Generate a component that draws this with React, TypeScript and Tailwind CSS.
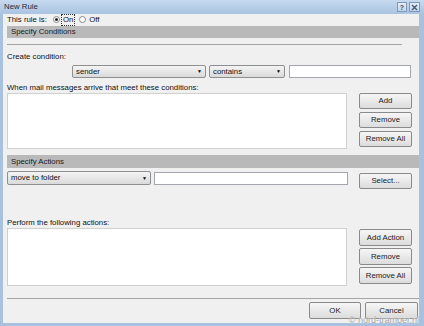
import React from 'react';

function Btn({ label, w = 'w-[53px]', h = 'h-[16px]' }: { label: string; w?: string; h?: string }) {
  return (
    <div
      className={`${w} ${h} flex items-center justify-center rounded-[2px] border border-[#8a8a8a] bg-gradient-to-b from-[#f6f6f6] to-[#dcdcdc] text-[#222]`}
    >
      {label}
    </div>
  );
}

function Select({ label, className }: { label: string; className: string }) {
  return (
    <div
      className={`${className} flex items-center rounded-[2px] border border-[#8e8f8f] bg-gradient-to-b from-[#f4f4f4] to-[#dadada] pl-[3px] pr-[3px]`}
    >
      <span>{label}</span>
      <span className="ml-auto text-[5px] leading-none text-black">▼</span>
    </div>
  );
}

function TextBox({ className }: { className: string }) {
  return <div className={`${className} border border-[#a3a6ad] bg-white`} />;
}

function Header({ label, h }: { label: string; h: string }) {
  return (
    <div className={`${h} flex items-center bg-[#b9b9b9] pl-[4px] text-[#1a1a1a]`}>
      {label}
    </div>
  );
}

function Radio({ checked }: { checked?: boolean }) {
  return (
    <div className="flex h-[7px] w-[7px] items-center justify-center rounded-full border border-[#8a8a8a] bg-white">
      {checked && <div className="h-[3px] w-[3px] rounded-full bg-[#222]" />}
    </div>
  );
}

export default function App() {
  return (
    <div className="relative flex h-[326px] w-[424px] flex-col overflow-hidden bg-[#a7c1df] font-['Liberation_Sans',Arial,sans-serif] text-[7.8px] leading-none text-[#111]">
      {/* title bar */}
      <div className="flex h-[14px] items-center bg-gradient-to-b from-[#c6daef] to-[#a9c3e1] pl-[4px] pr-[4px]">
        <span className="text-[7.8px] text-[#1b2a3c]">New Rule</span>
        <div className="ml-auto flex gap-[2px]">
          <div className="flex h-[10px] w-[10px] items-center justify-center border border-[#7f98b8] bg-gradient-to-b from-[#e4eef9] to-[#c2d5ec] text-[7px] font-bold text-[#3a4a5e]">
            ?
          </div>
          <div className="flex h-[10px] w-[11px] items-center justify-center border border-[#7f98b8] bg-gradient-to-b from-[#e4eef9] to-[#c2d5ec]">
            <svg width="7" height="7" viewBox="0 0 7 7">
              <path d="M1 1 L6 6 M6 1 L1 6" stroke="#4a5a6e" strokeWidth="1.4" />
            </svg>
          </div>
        </div>
      </div>

      {/* client area */}
      <div className="mb-[3px] ml-[3px] mr-[5px] flex flex-1 flex-col bg-[#f0f0f0] pl-[4px]">
        <div className="flex h-[12px] items-center">
          <span>This rule is:</span>
          <div className="ml-[6px] flex items-center">
            <Radio checked />
            <span className="ml-[1px] border border-dotted border-[#333] px-[1px] py-[1px]">On</span>
          </div>
          <div className="ml-[4px] flex items-center">
            <Radio />
            <span className="ml-[3px]">Off</span>
          </div>
        </div>

        <Header label="Specify Conditions" h="h-[12px]" />

        <div className="mt-[6px] h-px w-[395px] bg-[#a5a5a5]" />

        <div className="mt-[7px] flex h-[10px] items-center">Create condition:</div>

        <div className="mt-[3px] flex h-[13px] items-stretch">
          <Select label="sender" className="ml-[65px] w-[134px]" />
          <Select label="contains" className="ml-[3px] w-[76px]" />
          <TextBox className="ml-[4px] w-[122px]" />
        </div>

        <div className="mt-[5px] flex h-[10px] items-center">
          When mail messages arrive that meet these conditions:
        </div>

        <div className="flex">
          <div className="h-[56px] w-[340px] border border-[#d0d0d0] bg-white" />
          <div className="ml-[12px] flex flex-col gap-[3px]">
            <Btn label="Add" />
            <Btn label="Remove" />
            <Btn label="Remove All" />
          </div>
        </div>

        <div className="mt-[6px]">
          <Header label="Specify Actions" h="h-[13px]" />
        </div>

        <div className="mt-[3px] flex items-start">
          <Select label="move to folder" className="h-[14px] w-[144px]" />
          <TextBox className="ml-[3px] mt-[1px] h-[13px] w-[194px]" />
          <div className="ml-[11px] mt-[2px]">
            <Btn label="Select..." />
          </div>
        </div>

        <div className="mt-[29px] flex h-[10px] items-center">Perform the following actions:</div>

        <div className="flex">
          <div className="h-[58px] w-[340px] border border-[#d0d0d0] bg-white" />
          <div className="ml-[12px] mt-[1px] flex flex-col gap-[2px]">
            <Btn label="Add Action" h="h-[17px]" />
            <Btn label="Remove" h="h-[17px]" />
            <Btn label="Remove All" h="h-[17px]" />
          </div>
        </div>

        <div className="mt-[12px] h-px w-[412px] bg-[#a5a5a5]" />

        <div className="mt-[3px] flex justify-end gap-[4px] pr-[1px]">
          <Btn label="OK" w="w-[52px]" h="h-[17px]" />
          <Btn label="Cancel" w="w-[53px]" h="h-[17px]" />
        </div>
      </div>

      <div className="absolute bottom-[1px] right-[5px] text-[9px] leading-none text-[#a4a4a4] [text-shadow:0_0_1px_#fff]">
        © nord-tramper.nl
      </div>
    </div>
  );
}
